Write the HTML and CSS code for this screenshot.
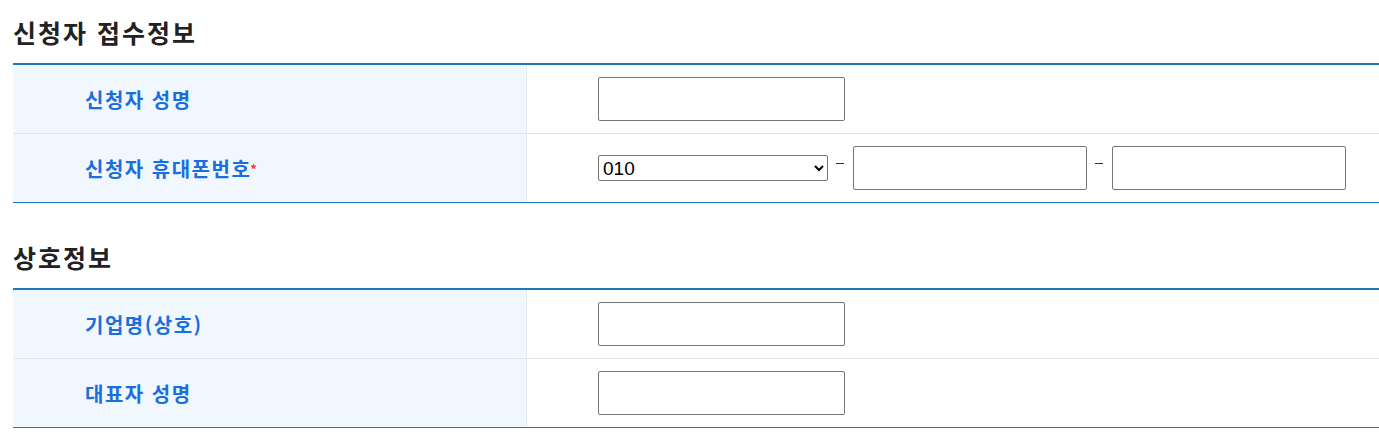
FILE: index.html
```html
<!DOCTYPE html>
<html lang="ko">
<head>
<meta charset="utf-8">
<link rel="stylesheet" href="styles.css">
</head>
<body>
<div class="page">
  <section class="section">
    <h2 class="title">신청자 접수정보</h2>
    <div class="form-table">
      <div class="row">
        <div class="label">신청자 성명</div>
        <div class="value"><input class="text" type="text"></div>
      </div>
      <div class="row">
        <div class="label">신청자 휴대폰번호<span class="req">*</span></div>
        <div class="value">
          <select class="sel"><option>010</option></select>
          <span class="dash"></span>
          <input class="text phone" type="text">
          <span class="dash"></span>
          <input class="text phone" type="text">
        </div>
      </div>
    </div>
  </section>
  <section class="section second">
    <h2 class="title">상호정보</h2>
    <div class="form-table">
      <div class="row">
        <div class="label">기업명(상호)</div>
        <div class="value"><input class="text" type="text"></div>
      </div>
      <div class="row">
        <div class="label">대표자 성명</div>
        <div class="value"><input class="text" type="text"></div>
      </div>
    </div>
  </section>
</div>
</body>
</html>
```

FILE: styles.css
```css
html, body {
  margin: 0;
  padding: 0;
  background: #ffffff;
}
.page {
  padding: 17px 0 0 13px;
  font-family: "Noto Sans CJK KR", "Noto Sans", sans-serif;
}
.section.second {
  margin-top: 39px;
}
.title {
  margin: 0 0 16px 0;
  font-size: 25px;
  line-height: 30px;
  font-weight: 700;
  color: #222222;
  letter-spacing: 2px;
}
.form-table {
  border-top: 2px solid #1f76b8;
  border-bottom: 1px solid #1f76b8;
}
.row {
  display: grid;
  grid-template-columns: 514px 1fr;
  border-bottom: 1px solid #dfe4ea;
}
.row:last-child {
  border-bottom: none;
}
.label {
  background: #f0f7ff;
  border-right: 1px solid #e1e9f2;
  padding-left: 72px;
  display: flex;
  align-items: center;
  font-size: 20px;
  font-weight: 700;
  color: #1a6fdc;
  letter-spacing: 1.5px;
}
.req {
  color: #e8403a;
  font-size: 13px;
  margin-left: -1px;
  letter-spacing: 0;
}
.value {
  padding: 12px 0 12px 71px;
  display: flex;
  align-items: center;
}
.text {
  box-sizing: border-box;
  width: 247px;
  height: 44px;
  border: 1px solid #767676;
  border-radius: 2px;
  margin: 0;
  padding: 0 6px;
  font-size: 18px;
  font-family: "Liberation Sans", sans-serif;
  background: #fff;
}
.text.phone {
  width: 234px;
}
.sel {
  box-sizing: border-box;
  width: 230px;
  height: 26px;
  margin: 0;
  font-size: 19px;
  font-family: "Liberation Sans", sans-serif;
  color: #000;
  border: 1px solid #767676;
  border-radius: 2px;
  background: #fff;
}
.dash {
  width: 8px;
  height: 1px;
  background: #333;
  margin: 0 9px 10px 8px;
}
```
